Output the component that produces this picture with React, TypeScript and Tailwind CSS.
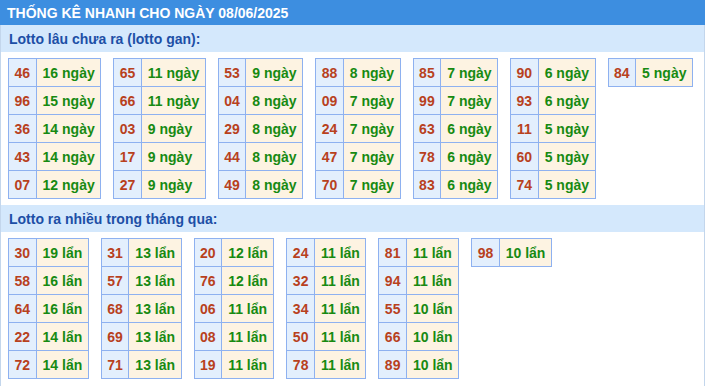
import React from "react";

type Row = [string, number];

const gan: Row[][] = [
  [["46", 16], ["96", 15], ["36", 14], ["43", 14], ["07", 12]],
  [["65", 11], ["66", 11], ["03", 9], ["17", 9], ["27", 9]],
  [["53", 9], ["04", 8], ["29", 8], ["44", 8], ["49", 8]],
  [["88", 8], ["09", 7], ["24", 7], ["47", 7], ["70", 7]],
  [["85", 7], ["99", 7], ["63", 6], ["78", 6], ["83", 6]],
  [["90", 6], ["93", 6], ["11", 5], ["60", 5], ["74", 5]],
  [["84", 5]],
];

const nhieu: Row[][] = [
  [["30", 19], ["58", 16], ["64", 16], ["22", 14], ["72", 14]],
  [["31", 13], ["57", 13], ["68", 13], ["69", 13], ["71", 13]],
  [["20", 12], ["76", 12], ["06", 11], ["08", 11], ["19", 11]],
  [["24", 11], ["32", 11], ["34", 11], ["50", 11], ["78", 11]],
  [["81", 11], ["94", 11], ["55", 10], ["66", 10], ["89", 10]],
  [["98", 10]],
];

function Table({ rows, unit }: { rows: Row[]; unit: string }) {
  return (
    <div className="grid grid-cols-[auto_auto] self-start border-l border-t border-[#8eb1f0]">
      {rows.map(([n, v]) => (
        <React.Fragment key={n}>
          <div className="flex h-[28px] items-center justify-center border-b border-r border-[#8eb1f0] bg-[#e3effd] px-[5.5px] text-[#b8411d]">
            {n}
          </div>
          <div className="flex h-[28px] items-center border-b border-r border-[#8eb1f0] bg-[#fdf3e2] pl-[6px] pr-[5.5px] text-[#178a12]">
            {v} {unit}
          </div>
        </React.Fragment>
      ))}
    </div>
  );
}

function Section({ title, tables, unit }: { title: string; tables: Row[][]; unit: string }) {
  return (
    <div>
      <div className="flex h-[27px] items-center bg-[#d4e8fc] pl-[8px] text-[#1d4fa6]">{title}</div>
      <div className="flex flex-wrap gap-[12px] pl-[7px] pt-[6px] pb-[6px]">
        {tables.map((t, i) => (
          <Table key={i} rows={t} unit={unit} />
        ))}
      </div>
    </div>
  );
}

export default function App() {
  return (
    <div
      className="w-[705px] bg-white text-[14px] font-bold leading-none"
      style={{ fontFamily: '"Liberation Sans", Arial, sans-serif' }}
    >
      <div className="flex h-[25px] items-center bg-[#3d8ee0] pl-[7px] text-white">
        THỐNG KÊ NHANH CHO NGÀY 08/06/2025
      </div>
      <div className="border-l border-r border-[#c3d6ec] pb-[20px]">
        <Section title="Lotto lâu chưa ra (lotto gan):" tables={gan} unit="ngày" />
        <Section title="Lotto ra nhiều trong tháng qua:" tables={nhieu} unit="lẩn" />
      </div>
    </div>
  );
}
